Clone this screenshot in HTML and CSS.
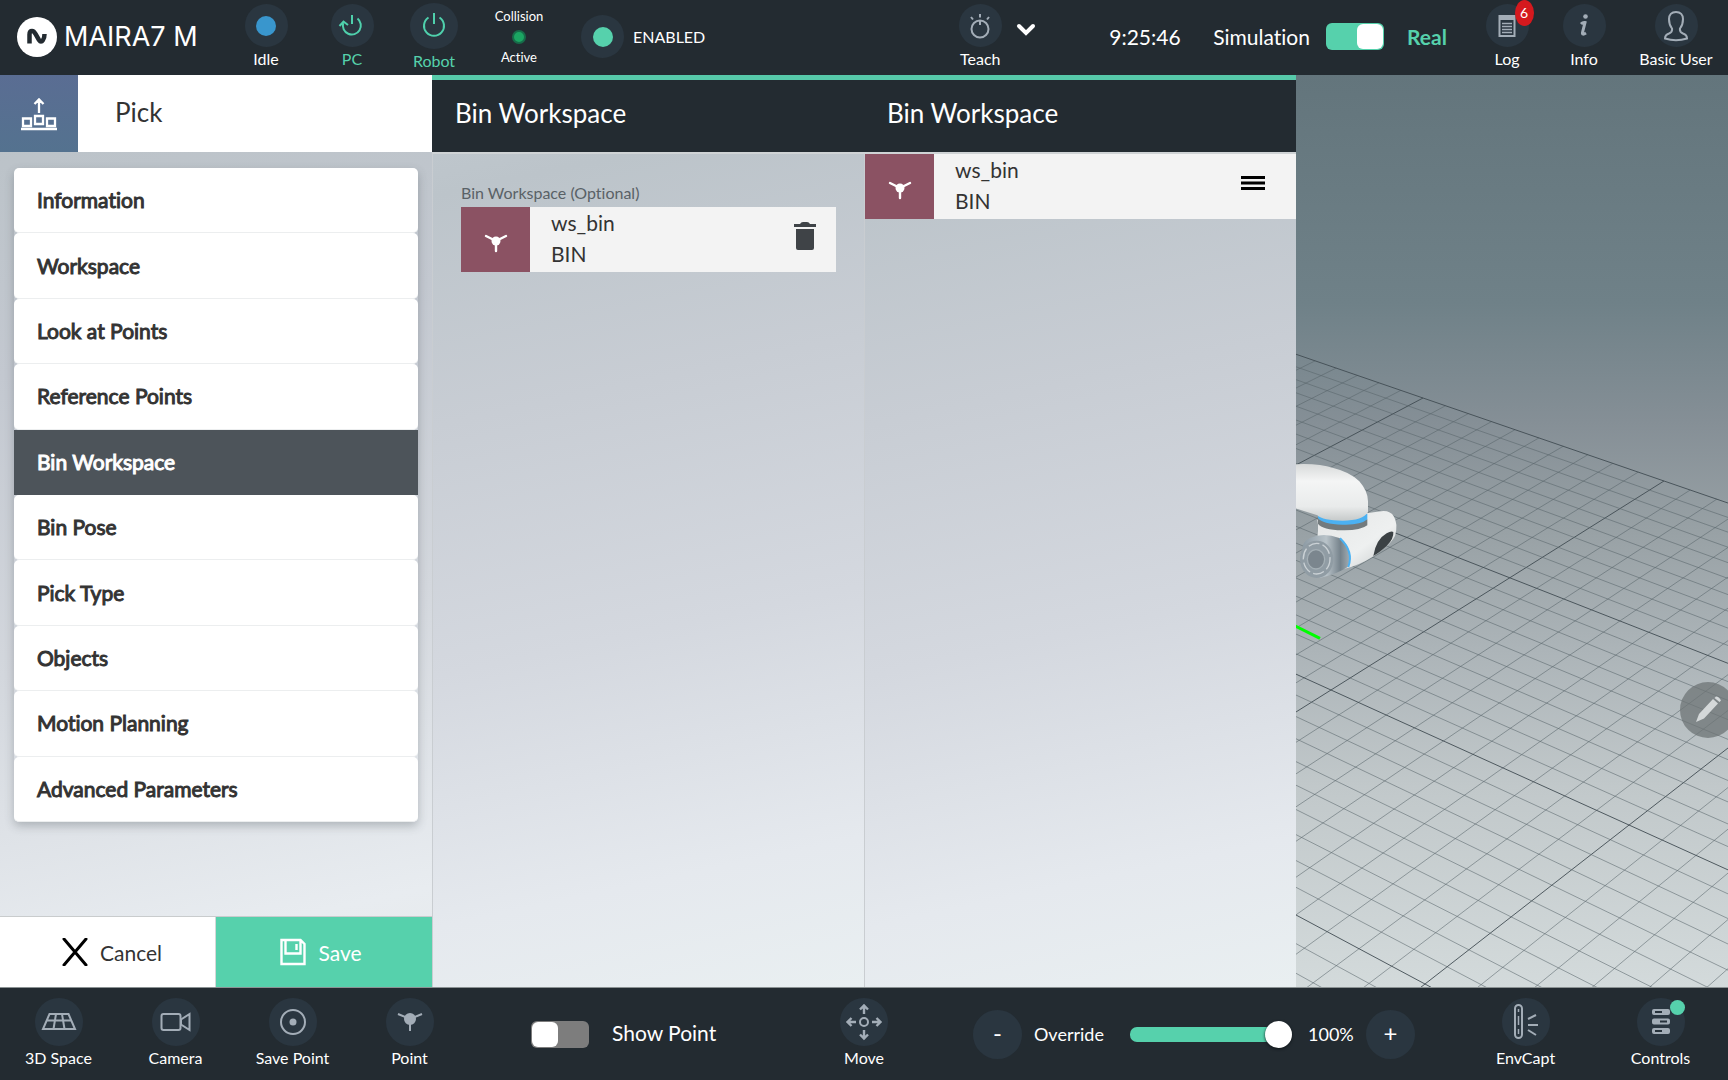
FILE: index.html
```html
<!DOCTYPE html>
<html lang="en">
<head>
  <meta charset="utf-8">
  <title>MAIRA7 M</title>
  <link rel="stylesheet" href="styles.css">
</head>
<body>
  <header class="topbar">
    <div class="brand">
      <svg width="40" height="40" viewBox="0 0 40 40"><circle cx="20" cy="20" r="20" fill="#fff"/><path d="M12.500 26.500V17.500q0-3.500 2.500-3.500 2 0 3.500 3l3.500 6q2 3 4 0 1.500-2 1.500-6" fill="none" stroke="#232b31" stroke-width="4.500"/></svg>
      <span>MAIRA7 M</span>
    </div>
    <button class="tile">
      <span class="disc"><i class="dot blue"></i></span>
      Idle
    </button>
    <button class="tile green">
      <span class="disc"><svg width="28" height="28" viewBox="0 0 28 28"><path d="M14 3v9M19.500 6.500a9 9 0 1 1-14.300 4.500M1.500 14l4-4.500 4.500 3.500" fill="none" stroke="currentColor" stroke-width="2"/></svg></span>
      PC
    </button>
    <button class="tile robot green">
      <span class="disc large"><svg width="28" height="28" viewBox="0 0 28 28"><path d="M14 1v11M8.500 5.500a10 10 0 1 0 11 0" fill="none" stroke="currentColor" stroke-width="2"/></svg></span>
      Robot
    </button>
    <div class="collision">
      <span>Collision</span>
      <i class="lamp"></i>
      <span>Active</span>
    </div>
    <div class="status">
      <span class="disc"><i class="dot mint"></i></span>
      ENABLED
    </div>

    <div class="spacer"></div>

    <button class="tile teach">
      <span class="disc"><svg width="28" height="28" viewBox="0 0 28 28"><circle cx="14" cy="17" r="8.500"/><path d="M14 8.500v4.500M14 2v3.500M5 5l2 2.500M23 5l-2 2.500"/></svg></span>
      Teach
    </button>
    <button class="chevron" aria-label="Modes"><svg width="20" height="14" viewBox="0 0 20 14"><path d="M3 3l7 7 7-7" fill="none" stroke="#fff" stroke-width="4" stroke-linecap="round"/></svg></button>
    <time class="clock">9:25:46</time>
    <label class="mode" for="real">Simulation</label>
    <input class="switch" type="checkbox" id="real" checked>
    <label class="mode real" for="real">Real</label>
    <button class="tile log">
      <span class="disc"><svg width="28" height="28" viewBox="0 0 28 28"><path d="M6.500 4h15v20h-15z"/><path d="M6 3h16v5H6z" fill="currentColor" stroke="none"/><path d="M9 11.500h10M9 14.500h10M9 17.500h10M9 20.500h10" stroke-width="1.500"/></svg><b class="badge">6</b></span>
      Log
    </button>
    <button class="tile info">
      <span class="disc"><svg width="28" height="28" viewBox="0 0 28 28"><circle cx="15.500" cy="4.500" r="2.300" fill="currentColor" stroke="none"/><path d="M11 12q2-2 4-1.500l-2.500 10q-.5 3 3.500.5" stroke-width="3"/></svg></span>
      Info
    </button>
    <button class="tile user">
      <span class="disc"><svg width="30" height="32" viewBox="0 0 30 32"><path d="M15 2c-4.500 0-7 3-7 7 0 4 1 7 3 9.500.5 3-.5 4-3 5-3 1-4 2.500-4 5Q15 32 26 28.500c0-2.500-1-4-4-5-2.500-1-3.500-2-3-5 2-2.500 3-5.500 3-9.500 0-4-2.500-7-7-7z"/></svg></span>
      Basic User
    </button>
  </header>

  <main class="workspace">
    <section class="steps">
      <div class="steps-head">
        <span class="steps-icon"><svg width="38" height="34" viewBox="0 0 38 34"><path d="M19 16V3M14.500 7L19 2.500 23.500 7M1 32h36M3 21.500h8v7.500H3zM15 19h8v8h-8zM27 21.500h8v7.500h-8z" fill="none" stroke="#fff" stroke-width="2.300"/></svg></span>
        <h1>Pick</h1>
      </div>
      <nav class="steps-list">
        <button>Information</button>
        <button>Workspace</button>
        <button>Look at Points</button>
        <button>Reference Points</button>
        <button class="active">Bin Workspace</button>
        <button>Bin Pose</button>
        <button>Pick Type</button>
        <button>Objects</button>
        <button>Motion Planning</button>
        <button>Advanced Parameters</button>
      </nav>
      <div class="actions">
        <button class="cancel"><svg width="26" height="28" viewBox="0 0 26 28"><path d="M2 1l22 26M24 1L2 27" stroke="#000" stroke-width="3" stroke-linecap="round"/></svg>Cancel</button>
        <button class="save"><svg width="26" height="28" viewBox="0 0 26 28"><path d="M1.500 2h19l4 4v20h-23zM5.500 2v13.500h15V2M16.500 6v6" fill="none" stroke="#fff" stroke-width="2.400"/></svg>Save</button>
      </div>
    </section>

    <section class="panel">
      <h2>Bin Workspace</h2>
      <div class="panel-body">
        <p class="field-label">Bin Workspace (Optional)</p>
        <div class="item">
          <span class="item-icon"><svg width="24" height="20" viewBox="0 0 24 20"><circle cx="12" cy="8" r="4.500" fill="#fff"/><path d="M2 3l10 5 10-5M12 8v10" fill="none" stroke="#fff" stroke-width="2.400" stroke-linecap="round"/></svg></span>
          <span class="item-text">ws_bin<br>BIN</span>
          <button class="item-btn" aria-label="Delete"><svg width="22" height="30" viewBox="0 0 22 30"><path d="M0 3h6q1-2 3-2h4q2 0 3 2h6v3H0zM2 8h18v19q0 2-2 2H4q-2 0-2-2z" fill="#3f4347"/></svg></button>
        </div>
      </div>
    </section>

    <section class="panel">
      <h2>Bin Workspace</h2>
      <div class="item">
        <span class="item-icon"><svg width="24" height="20" viewBox="0 0 24 20"><circle cx="12" cy="8" r="4.500" fill="#fff"/><path d="M2 3l10 5 10-5M12 8v10" fill="none" stroke="#fff" stroke-width="2.400" stroke-linecap="round"/></svg></span>
        <span class="item-text">ws_bin<br>BIN</span>
        <button class="item-btn menu" aria-label="Menu"><svg width="26" height="16" viewBox="0 0 26 16"><path d="M1 2.500h24M1 8h24M1 13.500h24" stroke="#000" stroke-width="2.800"/></svg></button>
      </div>
    </section>

    <section class="scene">
      <svg class="scene-view" viewBox="0 0 432 912" preserveAspectRatio="xMinYMin slice">
        <defs>
          <linearGradient id="arm" x1="0" y1="0" x2="0" y2="1"><stop offset="0" stop-color="#d8dada"/><stop offset=".3" stop-color="#f4f5f5"/><stop offset=".75" stop-color="#e9ebeb"/><stop offset="1" stop-color="#c6caca"/></linearGradient>
          <linearGradient id="wrist" x1="0" y1="0" x2="1" y2="1"><stop offset="0" stop-color="#e4e6e6"/><stop offset=".6" stop-color="#eef0f0"/><stop offset="1" stop-color="#c4c8c9"/></linearGradient>
          <linearGradient id="steel" x1="0" y1="0" x2="1" y2="0"><stop offset="0" stop-color="#8c9aa4"/><stop offset=".5" stop-color="#b9c3c9"/><stop offset=".8" stop-color="#75828b"/><stop offset="1" stop-color="#a4aeb4"/></linearGradient>
        </defs>
        <g id="grid"></g>
        <g transform="translate(-6 255) scale(.3333)">
          <path d="M82 570q6 25-4 80l80 68q50-12 90-38 60-40 68-65 8-35-4-55-12-20-40-16l-42 6z" fill="url(#wrist)"/>
          <path d="M250 678q8-50 40-68 14-8 20-4 2 20-20 42-22 20-40 30z" fill="#3b4144"/>
          <path d="M84 568h148v18q-20 16-75 15-60-2-73-20z" fill="#737b7e"/>
          <path d="M84 552h148v16q-20 18-75 16-60-2-73-20z" fill="#4bb1f2"/>
          <path d="M0 404q80-6 130 10 50 12 78 40 26 30 26 60v32q-15 26-76 26-60 0-76-16L0 530z" fill="url(#arm)"/>
          <path d="M60 624q40-18 88 0 32 20 32 60 0 20-8 28-30 20-82 32l-50-66q-10-42 20-54z" fill="url(#steel)"/>
          <path d="M150 625q42 40 25 86" fill="none" stroke="#4bb1f2" stroke-width="6"/>
          <ellipse cx="80" cy="688" rx="50" ry="56" fill="#909ca4"/>
          <ellipse cx="80" cy="686" rx="40" ry="46" fill="none" stroke="#cad1d5" stroke-width="4" stroke-dasharray="34 10"/>
          <ellipse cx="78" cy="688" rx="26" ry="29" fill="#7b868e" stroke="#a4afb5" stroke-width="4"/>
          <path d="M0 880l90 45" stroke="#0f0" stroke-width="9"/>
        </g>
      </svg>
      <button class="edit" aria-label="Edit"><svg width="30" height="30" viewBox="0 0 30 30"><path d="M3 27l3-8L20 4l5 4.500L11 23.500zM21.500 3l1.500-1.500q3 0 5 4L26.500 7z" fill="#d4d8d9"/></svg></button>
    </section>
  </main>

  <footer class="bottombar">
    <div class="group">
      <button class="tile">
        <span class="disc"><svg width="36" height="20" viewBox="0 0 36 20"><path d="M8.500 2h19L34 17H2zM5.500 8.500h25M15 2l-2.500 15M21 2l2.500 15"/></svg></span>
        3D Space
      </button>
      <button class="tile">
        <span class="disc"><svg width="32" height="22" viewBox="0 0 32 22"><rect x="1.500" y="3" width="19" height="16" rx="2"/><path d="M21 8.500L29.500 3v16L21 13.500z"/></svg></span>
        Camera
      </button>
      <button class="tile">
        <span class="disc"><svg width="28" height="28" viewBox="0 0 28 28"><circle cx="14" cy="14" r="12"/><circle cx="14" cy="14" r="3.500" fill="currentColor" stroke="none"/></svg></span>
        Save Point
      </button>
      <button class="tile">
        <span class="disc"><svg width="28" height="24" viewBox="0 0 28 24"><circle cx="14" cy="9" r="5" fill="currentColor"/><path d="M2 4l12 5 12-5M14 9v12"/></svg></span>
        Point
      </button>
      <input class="switch" type="checkbox" id="show-point">
      <label class="show-point" for="show-point">Show Point</label>
    </div>

    <button class="tile move">
      <span class="disc"><svg width="38" height="38" viewBox="0 0 38 38"><circle cx="19" cy="19" r="4"/><path d="M19 11V3M15 6.500L19 2.500l4 4M19 27v8M15 31.500l4 4 4-4M11 19H3M6.500 15l-4 4 4 4M27 19h8M31.500 15l4 4-4 4" stroke-width="2.400"/></svg></span>
      Move
    </button>

    <div class="group right">
      <button class="round" aria-label="Decrease">-</button>
      <label class="override" for="override">Override</label>
      <input class="slider" type="range" id="override" min="0" max="100" value="100">
      <output class="percent" for="override">100%</output>
      <button class="round" aria-label="Increase">+</button>
      <div class="spacer"></div>
      <button class="tile wide">
        <span class="disc"><svg width="30" height="38" viewBox="0 0 30 38"><rect x="4" y="2" width="7" height="33" rx="3.500"/><path d="M7.500 6v3M7.500 13v9M7.500 26v5" stroke-width="1.500"/><path d="M17 16l8-4M17 22h10M17 27l8 5"/></svg></span>
        EnvCapt
      </button>
      <button class="tile wide">
        <span class="disc"><svg width="20" height="28" viewBox="0 0 20 28"><path d="M3 1h14q2 0 2 2v2q0 2-2 2H3Q1 7 1 5V3q0-2 2-2zM3 10.500h14q2 0 2 2v2q0 2-2 2H3q-2 0-2-2v-2q0-2 2-2zM3 20h14q2 0 2 2v2q0 2-2 2H3q-2 0-2-2v-2q0-2 2-2z" fill="currentColor" stroke="none"/><path d="M4 4h7M9 13.500h7M4 23h7" stroke="#27323b" stroke-width="2"/></svg><i class="alert"></i></span>
        Controls
      </button>
    </div>
  </footer>

  <script src="scene.js"></script>
</body>
</html>
```

FILE: styles.css
```css
* {
  box-sizing: border-box;
}

body {
  margin: 0;
  height: 100vh;
  display: flex;
  flex-direction: column;
  overflow: hidden;
  font-family: Lato, sans-serif;
  font-size: 16px;
  font-variant-ligatures: none;
  color: #333;
}

button {
  font: inherit;
  font-variant-ligatures: none;
  color: inherit;
  border: none;
  background: none;
  padding: 0;
  cursor: pointer;
}

h1,
h2 {
  margin: 0;
  font-size: 26px;
  font-weight: 400;
}

svg {
  display: block;
}

.spacer {
  flex: 1;
}

/* bars */

.topbar,
.bottombar {
  background: #232b31;
  color: #fff;
}

.topbar {
  height: 75px;
  padding-bottom: 2px;
  display: flex;
  align-items: center;
  flex-shrink: 0;
}

.brand {
  width: 223px;
  padding-left: 17px;
  display: flex;
  align-items: center;
  gap: 7px;
  font-family: Inter, sans-serif;
  font-size: 27px;
  white-space: nowrap;
}

.tile {
  width: 86px;
  display: flex;
  flex-direction: column;
  align-items: center;
  gap: 2px;
  line-height: 20px;
  white-space: nowrap;
}

.green {
  color: #56d1ac;
}

.disc {
  position: relative;
  width: 43px;
  height: 43px;
  border-radius: 50%;
  background: #2a3640;
  display: flex;
  align-items: center;
  justify-content: center;
  flex-shrink: 0;
}

.disc.large {
  width: 48px;
  height: 46px;
}

.disc svg {
  fill: none;
  stroke: currentColor;
  stroke-width: 2;
  color: #a3adb7;
}

.green .disc svg {
  color: #4fd0ac;
}

.dot {
  width: 20px;
  height: 20px;
  border-radius: 50%;
}

.blue {
  background: #3996cd;
}

.mint {
  background: #56d1ac;
}

.topbar .robot {
  width: 78px;
}

.collision {
  width: 92px;
  display: flex;
  flex-direction: column;
  align-items: center;
  gap: 6px;
  font-size: 13px;
  line-height: 15px;
}

.lamp {
  width: 14px;
  height: 14px;
  border-radius: 50%;
  background: #1ba562;
  border: 2px solid #176b49;
}

.status {
  display: flex;
  align-items: center;
  gap: 9px;
  margin-left: 16px;
}

.topbar .teach {
  width: 60px;
}

.chevron {
  margin: -14px 0 0 6px;
}

.clock {
  width: 104px;
  margin-left: 73px;
  font-size: 21px;
}

.mode {
  font-size: 21px;
}

.real {
  width: 63px;
  color: #56d1ac;
  font-weight: 700;
}

.switch {
  appearance: none;
  width: 58px;
  height: 27px;
  margin: 0 23px 0 16px;
  padding: 1px;
  border-radius: 6px;
  background: #7d7d7d;
  display: flex;
  flex-shrink: 0;
}

.switch::before {
  content: "";
  width: 26px;
  height: 25px;
  border-radius: 6px;
  background: #fff;
}

.switch:checked {
  background: #56d1ac;
  justify-content: flex-end;
}

.topbar .log {
  width: 74px;
}

.topbar .info {
  width: 80px;
}

.topbar .user {
  width: 104px;
}

.badge {
  position: absolute;
  top: -4px;
  right: -5px;
  width: 19px;
  height: 26px;
  border-radius: 50%;
  background: #d5191e;
  color: #fff;
  font-size: 14px;
  font-weight: 400;
  line-height: 26px;
  text-align: center;
}

/* main area */

.workspace {
  flex: 1;
  min-height: 0;
  display: grid;
  grid-template-columns: repeat(4, 1fr);
}

.steps {
  display: flex;
  flex-direction: column;
  background: linear-gradient(168deg, #b9c1c6 0%, #c3c8d0 30%, #d3d7dd 60%, #e8ecf0 90%, #e5e9ea 100%);
}

.steps-head {
  height: 77px;
  display: flex;
  align-items: center;
  background: #fff;
}

.steps-icon {
  width: 78px;
  height: 77px;
  display: flex;
  align-items: center;
  justify-content: center;
  background: linear-gradient(#5a6d93, #54728f);
}

.steps-head h1 {
  padding: 0 0 3px 37px;
}

.steps-list {
  flex: 1;
  margin: 16px 14px 94px;
  display: flex;
  flex-direction: column;
  border-radius: 5px;
  box-shadow: 0 4px 10px rgba(60, 70, 75, .3);
}

.steps-list button {
  flex: 1;
  padding: 0 0 1px 23px;
  text-align: left;
  font-size: 21px;
  -webkit-text-stroke: 1px;
  background: #fff;
  border-bottom: 1px solid #eceeef;
  border-radius: 5px;
}

.steps-list .active {
  background: #4d545a;
  color: #fff;
  border-color: #4d545a;
  border-radius: 0;
}

.actions {
  height: 71px;
  display: grid;
  grid-template-columns: 1fr 1fr;
  border-top: 1px solid #c9cccd;
}

.actions button {
  display: flex;
  align-items: center;
  justify-content: center;
  gap: 12px;
  font-size: 21px;
}

.actions .cancel {
  background: #fff;
  border-right: 1px solid #d5d8d8;
  padding-left: 9px;
}

.actions .save {
  background: #56d1ac;
  color: #fff;
  padding-right: 6px;
}

.panel {
  background: linear-gradient(168deg, #c2cad0 0%, #bcc4ca 12%, #c8cdd4 35%, #d4d8df 60%, #e5e9ee 85%, #e9eff1 100%);
  border-left: 1px solid #c9cdd1;
}

.panel h2 {
  height: 79px;
  margin-left: -1px;
  padding-left: 23px;
  border-top: 5px solid #56c9a9;
  border-bottom: 2px solid #cfd3d5;
  background: #232b31;
  color: #fff;
  line-height: 66px;
}

.panel-body {
  padding: 27px 28px;
}

.field-label {
  margin: 0 0 3px;
  line-height: 23px;
  color: #596166;
}

.item {
  height: 65px;
  display: flex;
  background: #f3f3f3;
}

.item-icon {
  width: 69px;
  padding-top: 6px;
  display: flex;
  align-items: center;
  justify-content: center;
  background: #8b5263;
}

.item-text {
  flex: 1;
  padding-left: 21px;
  font-size: 21px;
  line-height: 31px;
}

.item-btn {
  width: 62px;
  height: 58px;
  display: flex;
  align-items: center;
  justify-content: center;
}

.item-btn.menu {
  width: 86px;
}

.scene {
  position: relative;
  overflow: hidden;
  background: linear-gradient(#63757c 0%, #6f8188 25%, #858f96 38%, #98a1a5 50%, #acb4b8 63%, #c1c8ca 78%, #d3dadb 100%);
}

.scene-view {
  position: absolute;
  width: 100%;
  height: 100%;
}

.minor {
  stroke: #57646a;
  stroke-opacity: .55;
  stroke-width: 1;
}

.major {
  stroke: #414c53;
  stroke-opacity: .9;
  stroke-width: 1;
}

.edit {
  position: absolute;
  right: -8px;
  top: 607px;
  width: 56px;
  height: 56px;
  border-radius: 50%;
  background: rgba(110, 116, 117, .75);
  display: flex;
  align-items: center;
  justify-content: center;
}

/* bottom bar */

.bottombar {
  height: 93px;
  display: grid;
  grid-template-columns: 1fr 80px 1fr;
  align-items: center;
  flex-shrink: 0;
  border-top: 1px solid #8b9293;
}

.group {
  display: flex;
  align-items: center;
}

.bottombar .tile {
  width: 117px;
  padding-bottom: 3px;
}

.bottombar .move {
  width: 80px;
}

.bottombar .wide {
  width: 135px;
}

.bottombar .disc {
  width: 48px;
  height: 48px;
}

.bottombar .switch {
  margin-left: 63px;
}

.show-point {
  font-size: 21px;
  line-height: 24px;
  padding-bottom: 2px;
}

.right {
  padding-left: 69px;
}

.round {
  width: 49px;
  height: 49px;
  padding-bottom: 4px;
  border-radius: 50%;
  background: #2a3640;
  font-size: 24px;
  line-height: 41px;
}

.override {
  width: 108px;
  padding-left: 12px;
  font-size: 18px;
}

.slider {
  appearance: none;
  width: 162px;
  height: 15px;
  margin: 0;
  border-radius: 7px;
  background: linear-gradient(to right, #56d1ac 92%, transparent 92%);
}

.slider::-webkit-slider-thumb {
  appearance: none;
  width: 27px;
  height: 27px;
  border-radius: 50%;
  background: #fff;
  box-shadow: 0 1px 3px #101619;
}

.percent {
  width: 74px;
  padding-left: 16px;
  font-size: 18px;
}

.alert {
  position: absolute;
  top: 2px;
  right: 0;
  width: 15px;
  height: 15px;
  border-radius: 50%;
  background: #56d1ac;
}
```

FILE: scene.js
```js
const grid = document.getElementById('grid');

// floor plane to screen, one unit = one major cell
function project(i, j) {
  const w = 1 - 0.0728 * i - 0.0636 * j;
  return [
    (214.2 * i - 156.6 * j + 127) / w,
    (53.44 * i + 57.78 * j + 323) / w
  ];
}

function addLine(from, to, major) {
  const line = document.createElementNS('http://www.w3.org/2000/svg', 'line');
  line.setAttribute('x1', from[0]);
  line.setAttribute('y1', from[1]);
  line.setAttribute('x2', to[0]);
  line.setAttribute('y2', to[1]);
  line.setAttribute('class', major ? 'major' : 'minor');
  grid.appendChild(line);
}

for (let n = -10; n <= 40; n++) {
  addLine(project(n / 10, 0), project(n / 10, 6), n % 10 === 0);
}

for (let n = 0; n <= 60; n++) {
  addLine(project(-1, n / 10), project(4, n / 10), n % 10 === 0);
}
```
